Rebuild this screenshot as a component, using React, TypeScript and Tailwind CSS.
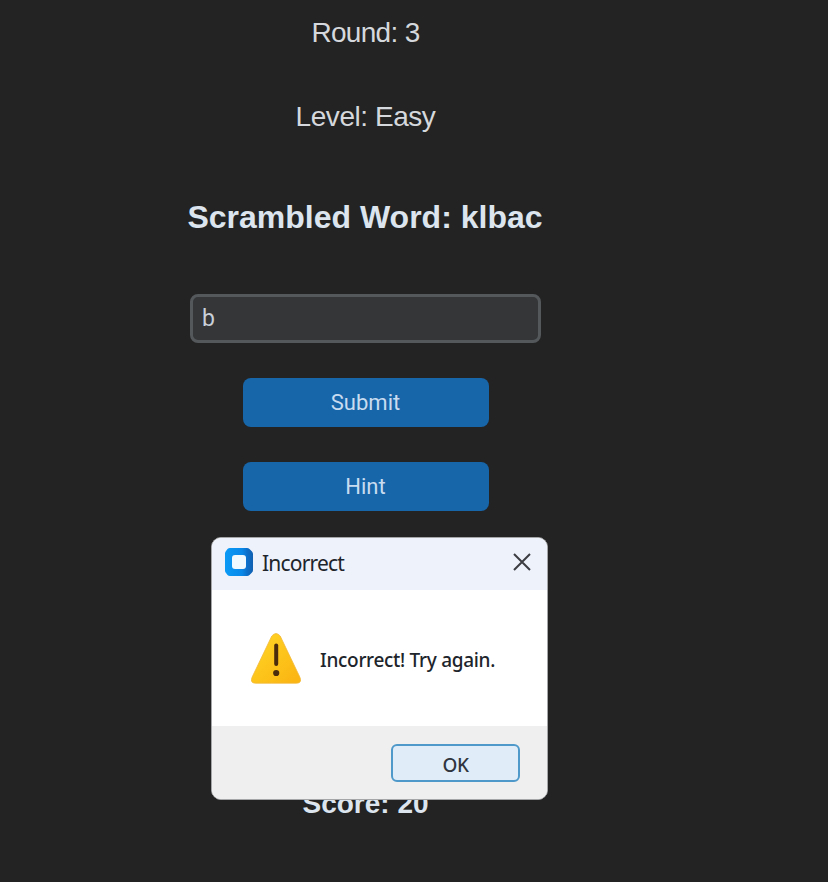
import React from "react";

function AppIcon() {
  return (
    <svg viewBox="0 0 28 28" className="h-7 w-7 shrink-0">
      <defs>
        <linearGradient id="app-blue" x1="0" y1="0" x2="1" y2="0">
          <stop offset="0" stopColor="#0a9af5" />
          <stop offset="0.6" stopColor="#0889ea" />
          <stop offset="0.8" stopColor="#0b6fc9" />
          <stop offset="1" stopColor="#1260b0" />
        </linearGradient>
      </defs>
      <path
        d="M5 0H22Q23.5 0 24.5 1L27 3.5Q28 4.5 28 6V22Q28 23.5 27 24.5L24.5 27Q23.5 28 22 28H5Q3.5 28 2.5 27L1 25Q0 24 0 22.5V5.5Q0 4 1 3L2.5 1Q3.5 0 5 0Z"
        fill="url(#app-blue)"
      />
      <rect x="7" y="7" width="14" height="14" rx="3" fill="#eefaff" />
    </svg>
  );
}

function WarningIcon() {
  return (
    <svg viewBox="0 0 50 51" className="h-[51px] w-[50px] shrink-0">
      <defs>
        <linearGradient id="warn" x1="0" y1="0" x2="1" y2="1">
          <stop offset="0.2" stopColor="#ffd022" />
          <stop offset="0.9" stopColor="#fbb613" />
        </linearGradient>
      </defs>
      <path
        d="M20.8 3Q25 -2 29.2 3L48.8 44Q51.4 50 45.5 50.2H4.5Q-1.4 50 1.2 44Z"
        fill="url(#warn)"
        stroke="#f1b93a"
        strokeWidth="0.8"
      />
      <path d="M25.2 12.5V31" stroke="#4b2c0c" strokeWidth="4" strokeLinecap="round" />
      <circle cx="25.2" cy="40" r="3.1" fill="#4b2c0c" />
    </svg>
  );
}

function Dialog() {
  return (
    <div
      role="dialog"
      className="absolute left-[211px] top-[537px] flex h-[263px] w-[337px] flex-col overflow-hidden rounded-[10px] border border-[#a5a6a8] bg-white font-['Noto_Sans',sans-serif] text-[#20242b]"
    >
      <div className="flex h-[52px] shrink-0 items-center bg-[#eef2fb] pb-1 pl-[13px] pr-4">
        <AppIcon />
        <span className="ml-[9px] whitespace-nowrap pt-[2px] text-[21px] leading-7 tracking-[-0.8px]">
          Incorrect
        </span>
        <svg viewBox="0 0 18 18" className="ml-auto h-[18px] w-[18px]">
          <path d="M1 1L17 17M17 1L1 17" stroke="#3b3d42" strokeWidth="2" />
        </svg>
      </div>
      <div className="flex grow items-center pl-[39px]">
        <WarningIcon />
        <span className="ml-[19px] whitespace-nowrap pt-[3px] text-[19px] font-medium leading-6 tracking-[-0.3px]">
          Incorrect! Try again.
        </span>
      </div>
      <div className="flex h-[73px] shrink-0 items-center justify-end bg-[#efefef] pr-[27px] pt-px">
        <button className="flex h-[38px] w-[129px] items-center justify-center rounded-[6px] border-2 border-[#4f99ca] bg-[#e0edf9] pt-[3px] text-[19px] font-medium leading-6 tracking-[-0.5px] text-[#30353e]">
          OK
        </button>
      </div>
    </div>
  );
}

export default function App() {
  return (
    <main className="relative h-[882px] w-[828px] overflow-hidden bg-[#232323] font-['Liberation_Sans',Arial,sans-serif] text-[#dce4ee]">
      <div className="flex w-[731px] flex-col items-center pt-[17px]">
        <p className="text-[28px] leading-8 tracking-[-0.7px] text-[#d5d8dc]">Round: 3</p>
        <p className="mt-[52px] text-[28px] leading-8 tracking-[-0.45px] text-[#d5d8dc]">Level: Easy</p>
        <h1 className="mt-[66px] pr-px text-[32px] font-bold leading-9">Scrambled Word: klbac</h1>
        <input
          defaultValue="b"
          className="mt-[59px] h-[49px] w-[351px] rounded-lg border-[3px] border-[#55585b] bg-[#343638] px-[9px] font-[Roboto,sans-serif] text-[23px] text-[#c9d0d8] outline-none"
        />
        <button className="mt-[35px] h-[49px] w-[246px] rounded-lg bg-[#1866aa] pb-px font-[Roboto,sans-serif] text-[22px] text-[#c8dcf0]">
          Submit
        </button>
        <button className="mt-[35px] h-[49px] w-[246px] rounded-lg bg-[#1866aa] pb-px font-[Roboto,sans-serif] text-[22px] text-[#c8dcf0]">
          Hint
        </button>
        <p className="mt-[277px] text-[28px] font-bold leading-8">Score: 20</p>
      </div>
      <Dialog />
    </main>
  );
}
